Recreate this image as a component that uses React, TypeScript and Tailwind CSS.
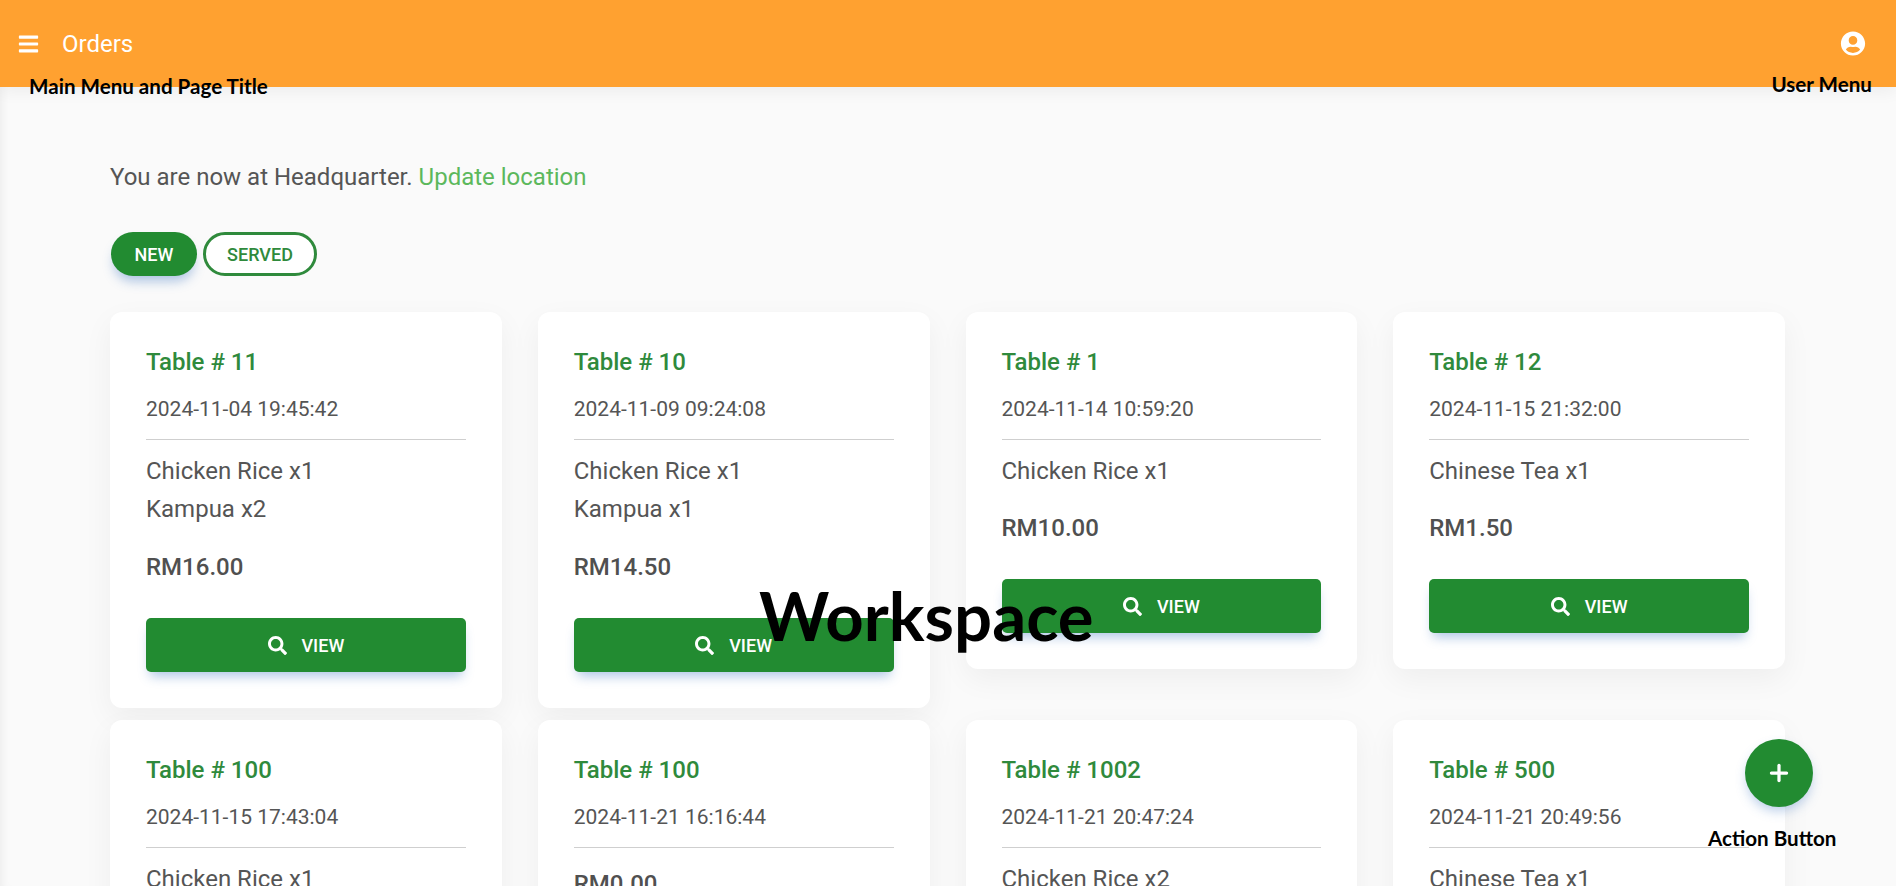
import { Plus } from 'lucide-react'
import { FaBars, FaSearch, FaUserCircle } from 'react-icons/fa'

interface Order {
  table: string
  time: string
  items: string[]
  total?: string
}

const orders: Order[] = [
  { table: 'Table # 11', time: '2024-11-04 19:45:42', items: ['Chicken Rice x1', 'Kampua x2'], total: 'RM16.00' },
  { table: 'Table # 10', time: '2024-11-09 09:24:08', items: ['Chicken Rice x1', 'Kampua x1'], total: 'RM14.50' },
  { table: 'Table # 1', time: '2024-11-14 10:59:20', items: ['Chicken Rice x1'], total: 'RM10.00' },
  { table: 'Table # 12', time: '2024-11-15 21:32:00', items: ['Chinese Tea x1'], total: 'RM1.50' },
  { table: 'Table # 100', time: '2024-11-15 17:43:04', items: ['Chicken Rice x1'] },
  { table: 'Table # 100', time: '2024-11-21 16:16:44', items: [], total: 'RM0.00' },
  { table: 'Table # 1002', time: '2024-11-21 20:47:24', items: ['Chicken Rice x2'] },
  { table: 'Table # 500', time: '2024-11-21 20:49:56', items: ['Chinese Tea x1'] }
]

const totalMargin = (count: number) => {
  if (count === 0) return 'mt-[22px]'
  return count === 1 ? 'mt-[24px]' : 'mt-[25px]'
}

const OrderCard = ({ order }: { order: Order }) => (
  <div className="rounded-[12px] bg-white px-[36px] pt-[36px] pb-[36px] shadow-[0_10px_30px_rgba(0,0,0,0.05)]">
    <h3 className="text-[24px] leading-[28px] font-medium text-[#2f8a3c]">{order.table}</h3>
    <p className="mt-[21px] text-[21px] leading-[24px] text-[#555]">{order.time}</p>
    <hr className="mt-[18px] mb-[12px] border-t border-[#cfcfcf]" />
    {order.items.map((item, i) => (
      <p key={i} className="text-[24px] leading-[38px] text-[#555]">
        {item}
      </p>
    ))}
    {order.total && (
      <p className={`${totalMargin(order.items.length)} text-[24px] leading-[28px] font-medium text-[#505050]`}>
        {order.total}
      </p>
    )}
    <button className="mt-[37px] flex h-[54px] w-full items-center justify-center gap-[15px] rounded-[5px] bg-[#228b31] text-[18px] font-medium text-white shadow-[0_8px_12px_-4px_rgba(50,110,190,0.4)]">
      <FaSearch className="h-[19px] w-[19px]" />
      VIEW
    </button>
  </div>
)

export default function App() {
  return (
    <div className="relative h-screen overflow-hidden bg-[#fafafa] font-['Roboto',sans-serif] shadow-[inset_8px_0_8px_-6px_rgba(0,0,0,0.06)]">
      <header className="flex h-[87px] items-center justify-between bg-[#ffa130] pr-[30px] pl-[18px] text-white shadow-[0_4px_16px_rgba(0,0,0,0.06)]">
        <div className="flex items-center gap-[23px]">
          <FaBars className="h-[22px] w-[21px]" />
          <span className="text-[24px] leading-[28px]">Orders</span>
        </div>
        <FaUserCircle className="h-[25px] w-[26px]" />
      </header>

      <main className="pr-[111px] pl-[110px]">
        <p className="mt-[76px] text-[24px] leading-[28px] text-[#555]">
          You are now at Headquarter. <a className="text-[#5cb85c]">Update location</a>
        </p>
        <div className="mt-[41px] ml-[1px] flex gap-[6px]">
          <button className="h-[44px] w-[86px] rounded-full bg-[#228b31] text-[18px] font-medium text-white shadow-[0_8px_12px_-3px_rgba(50,110,190,0.4)]">
            NEW
          </button>
          <button className="h-[44px] w-[114px] rounded-full border-[3px] border-[#2f8a3c] bg-white text-[18px] font-medium text-[#2f8a3c]">
            SERVED
          </button>
        </div>
        <div className="mt-[36px] grid grid-cols-4 items-start gap-x-[36px] gap-y-[12px]">
          {orders.map((order, i) => (
            <OrderCard key={i} order={order} />
          ))}
        </div>
      </main>

      <button className="absolute top-[739px] left-[1745px] flex h-[68px] w-[68px] items-center justify-center rounded-full bg-[#228b31] text-white shadow-[0_6px_12px_-2px_rgba(50,110,190,0.35)]">
        <Plus size={26} strokeWidth={3} />
      </button>

      <span className="absolute top-[73px] left-[29px] font-['Lato',sans-serif] text-[20.6px] leading-[26px] font-bold text-black">
        Main Menu and Page Title
      </span>
      <span className="absolute top-[71px] right-[24px] font-['Lato',sans-serif] text-[20.6px] leading-[26px] font-bold text-black">
        User Menu
      </span>
      <span className="absolute top-[825px] left-[1708px] font-['Lato',sans-serif] text-[20.6px] leading-[26px] font-bold text-black">
        Action Button
      </span>
      <span className="absolute top-[573px] left-[759px] font-['Lato',sans-serif] text-[67px] leading-[84px] font-bold text-black">
        Workspace
      </span>
    </div>
  )
}
